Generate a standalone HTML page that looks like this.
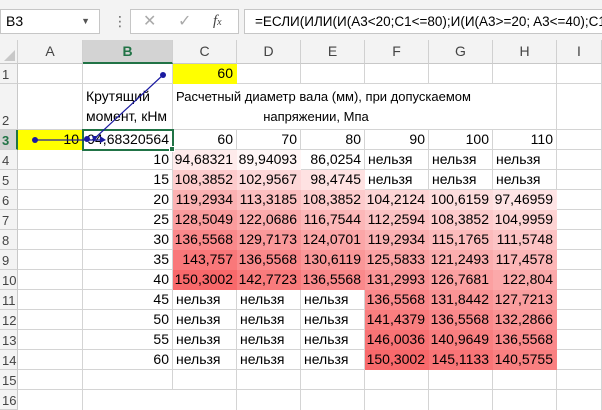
<!DOCTYPE html>
<html><head><meta charset="utf-8">
<style>
*{margin:0;padding:0;box-sizing:border-box}
body{width:602px;height:409px;overflow:hidden;background:#fff;font-family:"Liberation Sans","DejaVu Sans",sans-serif;font-size:14px;color:#000;position:relative}
.top{position:absolute;left:0;top:0;width:602px;height:40px;background:#f3f3f3}
.box{position:absolute;background:#fff;border:1px solid #c6c6c6;height:25px;top:9px;white-space:nowrap;overflow:hidden}
.ch{position:absolute;top:40px;height:24px;background:#f3f3f3;border-right:1px solid #d0d0d0;border-bottom:1px solid #c8c8c8;text-align:center;line-height:23px;color:#444;font-size:14px}
.rh{position:absolute;left:0;width:18px;background:#f3f3f3;border-bottom:1px solid #d0d0d0;border-right:1px solid #c8c8c8;color:#444;font-size:13px;padding-left:2px;display:flex;align-items:flex-end;padding-bottom:1px}
.grid{position:absolute;left:18px;top:64px;display:grid;grid-template-columns:65px 90px 64px 64px 64px 64px 64px 64px 45px;grid-template-rows:20px 46px repeat(14,20px)}
.grid div{border-right:1px solid #d4d4d4;border-bottom:1px solid #d4d4d4;white-space:nowrap;overflow:visible;line-height:19px;display:flex;align-items:flex-end}
.r{justify-content:flex-end;padding-right:3px}
.l{padding-left:3px}
</style></head><body>
<div class="top"></div>
<div class="box" style="left:0;width:100px;padding-left:5px;line-height:23px;font-size:14px">B3<span style="position:absolute;right:9px;top:0;font-size:9px;color:#555">▼</span></div>
<div style="position:absolute;left:113px;top:13px;color:#666;font-size:14px;line-height:16px">⋮</div>
<div class="box" style="left:130px;width:109px;color:#aaa;font-size:16px;line-height:23px"><span style="position:absolute;left:12px">✕</span><span style="position:absolute;left:47px">✓</span><span style="position:absolute;left:82px;color:#444;font-family:'Liberation Serif',serif;font-style:italic;font-size:15px">f<span style="font-size:10px">x</span></span></div>
<div class="box" style="left:244px;width:370px;padding-left:10px;line-height:23px;font-size:13.5px">=ЕСЛИ(ИЛИ(И(A3&lt;20;C1&lt;=80);И(И(A3&gt;=20; A3&lt;=40);C1&gt;(</div>

<div class="ch" style="left:0;width:18px"><span style="position:absolute;right:2px;bottom:2px;width:0;height:0;border-left:11px solid transparent;border-bottom:11px solid #c8c8c8"></span></div>
<div class="ch" style="left:18px;width:65px">A</div>
<div class="ch" style="left:83px;width:90px;background:#d3d3d3;border-bottom:2px solid #217346;color:#217346;font-weight:bold">B</div>
<div class="ch" style="left:173px;width:64px">C</div>
<div class="ch" style="left:237px;width:64px">D</div>
<div class="ch" style="left:301px;width:64px">E</div>
<div class="ch" style="left:365px;width:64px">F</div>
<div class="ch" style="left:429px;width:64px">G</div>
<div class="ch" style="left:493px;width:64px">H</div>
<div class="ch" style="left:557px;width:45px">I</div>

<div class="rh" style="top:64px;height:20px">1</div>
<div class="rh" style="top:84px;height:46px">2</div>
<div class="rh" style="top:130px;height:20px;background:#d3d3d3;border-right:2px solid #217346;color:#217346;font-weight:bold">3</div>
<div class="rh" style="top:150px;height:20px">4</div>
<div class="rh" style="top:170px;height:20px">5</div>
<div class="rh" style="top:190px;height:20px">6</div>
<div class="rh" style="top:210px;height:20px">7</div>
<div class="rh" style="top:230px;height:20px">8</div>
<div class="rh" style="top:250px;height:20px">9</div>
<div class="rh" style="top:270px;height:20px">10</div>
<div class="rh" style="top:290px;height:20px">11</div>
<div class="rh" style="top:310px;height:20px">12</div>
<div class="rh" style="top:330px;height:20px">13</div>
<div class="rh" style="top:350px;height:20px">14</div>
<div class="rh" style="top:370px;height:20px">15</div>
<div class="rh" style="top:390px;height:20px">16</div>

<div class="grid">
<div></div><div></div><div class="r" style="background:#ffff00;border-color:#ffff00">60</div><div></div><div></div><div></div><div></div><div></div><div></div>
<div></div><div class="l" style="white-space:normal;line-height:20px;padding-bottom:3px">Крутящий момент, кНм</div><div style="border-right:none"></div><div style="border-right:none"></div><div style="border-right:none"></div><div style="border-right:none"></div><div style="border-right:none"></div><div></div><div></div>
<div class="r" style="background:#ffff00;border-color:#ffff00">10</div><div class="r">94,68320564</div><div class="r">60</div><div class="r">70</div><div class="r">80</div><div class="r">90</div><div class="r">100</div><div class="r">110</div><div></div>
<div></div><div class="r">10</div><div class="r" style="background:#feebeb;border-color:#feebeb">94,68321</div><div class="r" style="background:#fff6f6;border-color:#fff6f6">89,94093</div><div class="r">86,0254</div><div class="l">нельзя</div><div class="l">нельзя</div><div class="l">нельзя</div><div></div>
<div></div><div class="r">15</div><div class="r" style="background:#fdcbcc;border-color:#fdcbcc">108,3852</div><div class="r" style="background:#fdd7d8;border-color:#fdd7d8">102,9567</div><div class="r" style="background:#fee2e2;border-color:#fee2e2">98,4745</div><div class="l">нельзя</div><div class="l">нельзя</div><div class="l">нельзя</div><div></div>
<div></div><div class="r">20</div><div class="r" style="background:#fbb1b2;border-color:#fbb1b2">119,2934</div><div class="r" style="background:#fcbfc0;border-color:#fcbfc0">113,3185</div><div class="r" style="background:#fdcbcc;border-color:#fdcbcc">108,3852</div><div class="r" style="background:#fdd5d5;border-color:#fdd5d5">104,2124</div><div class="r" style="background:#fddddd;border-color:#fddddd">100,6159</div><div class="r" style="background:#fee4e5;border-color:#fee4e5">97,46959</div><div></div>
<div></div><div class="r">25</div><div class="r" style="background:#fa9c9d;border-color:#fa9c9d">128,5049</div><div class="r" style="background:#fbabac;border-color:#fbabac">122,0686</div><div class="r" style="background:#fcb7b8;border-color:#fcb7b8">116,7544</div><div class="r" style="background:#fcc2c3;border-color:#fcc2c3">112,2594</div><div class="r" style="background:#fdcbcc;border-color:#fdcbcc">108,3852</div><div class="r" style="background:#fdd3d3;border-color:#fdd3d3">104,9959</div><div></div>
<div></div><div class="r">30</div><div class="r" style="background:#fa898b;border-color:#fa898b">136,5568</div><div class="r" style="background:#fa999a;border-color:#fa999a">129,7173</div><div class="r" style="background:#fba6a7;border-color:#fba6a7">124,0701</div><div class="r" style="background:#fbb1b2;border-color:#fbb1b2">119,2934</div><div class="r" style="background:#fcbbbc;border-color:#fcbbbc">115,1765</div><div class="r" style="background:#fcc3c4;border-color:#fcc3c4">111,5748</div><div></div>
<div></div><div class="r">35</div><div class="r" style="background:#f9787a;border-color:#f9787a">143,757</div><div class="r" style="background:#fa898b;border-color:#fa898b">136,5568</div><div class="r" style="background:#fa9798;border-color:#fa9798">130,6119</div><div class="r" style="background:#fba3a4;border-color:#fba3a4">125,5833</div><div class="r" style="background:#fbadae;border-color:#fbadae">121,2493</div><div class="r" style="background:#fcb6b7;border-color:#fcb6b7">117,4578</div><div></div>
<div></div><div class="r">40</div><div class="r" style="background:#f8696b;border-color:#f8696b">150,3002</div><div class="r" style="background:#f97b7c;border-color:#f97b7c">142,7723</div><div class="r" style="background:#fa898b;border-color:#fa898b">136,5568</div><div class="r" style="background:#fa9597;border-color:#fa9597">131,2993</div><div class="r" style="background:#fba0a1;border-color:#fba0a1">126,7681</div><div class="r" style="background:#fba9aa;border-color:#fba9aa">122,804</div><div></div>
<div></div><div class="r">45</div><div class="l">нельзя</div><div class="l">нельзя</div><div class="l">нельзя</div><div class="r" style="background:#fa898b;border-color:#fa898b">136,5568</div><div class="r" style="background:#fa9495;border-color:#fa9495">131,8442</div><div class="r" style="background:#fa9e9f;border-color:#fa9e9f">127,7213</div><div></div>
<div></div><div class="r">50</div><div class="l">нельзя</div><div class="l">нельзя</div><div class="l">нельзя</div><div class="r" style="background:#f97e7f;border-color:#f97e7f">141,4379</div><div class="r" style="background:#fa898b;border-color:#fa898b">136,5568</div><div class="r" style="background:#fa9394;border-color:#fa9394">132,2866</div><div></div>
<div></div><div class="r">55</div><div class="l">нельзя</div><div class="l">нельзя</div><div class="l">нельзя</div><div class="r" style="background:#f87375;border-color:#f87375">146,0036</div><div class="r" style="background:#f97f80;border-color:#f97f80">140,9649</div><div class="r" style="background:#fa898b;border-color:#fa898b">136,5568</div><div></div>
<div></div><div class="r">60</div><div class="l">нельзя</div><div class="l">нельзя</div><div class="l">нельзя</div><div class="r" style="background:#f8696b;border-color:#f8696b">150,3002</div><div class="r" style="background:#f97577;border-color:#f97577">145,1133</div><div class="r" style="background:#f98081;border-color:#f98081">140,5755</div><div></div>
<div></div><div></div><div></div><div></div><div></div><div></div><div></div><div></div><div></div>
<div style="border-bottom:none"></div><div style="border:none"></div><div style="border-bottom:none"></div><div style="border-bottom:none"></div><div style="border-bottom:none"></div><div style="border-bottom:none"></div><div style="border-bottom:none"></div><div style="border-bottom:none"></div><div style="border-bottom:none"></div>
</div>

<div style="position:absolute;left:176px;width:280px;top:87px;text-align:center;line-height:20px;white-space:nowrap;font-size:13px">Расчетный диаметр вала (мм), при допускаемом<br>напряжении, Мпа</div>

<div style="position:absolute;left:82px;top:129px;width:92px;height:22px;border:2px solid #217346"></div>
<div style="position:absolute;left:169px;top:146px;width:6px;height:6px;background:#217346;border:1px solid #fff"></div>

<svg style="position:absolute;left:0;top:0" width="602" height="409">
<line x1="35" y1="140" x2="100" y2="140" stroke="#1a1aa0" stroke-width="1.2"/>
<line x1="163" y1="75" x2="94" y2="139" stroke="#1a1aa0" stroke-width="1.2"/>
<circle cx="35" cy="140" r="3" fill="#1a1aa0"/>
<circle cx="163" cy="75" r="3" fill="#1a1aa0"/>
<circle cx="87" cy="139" r="3" fill="#1a1aa0"/>
<polygon points="100,136 106,140 100,143" fill="#1a1aa0"/>
<polygon points="92,136 98,136 94,142" fill="#1a1aa0"/>
</svg>
</body></html>
